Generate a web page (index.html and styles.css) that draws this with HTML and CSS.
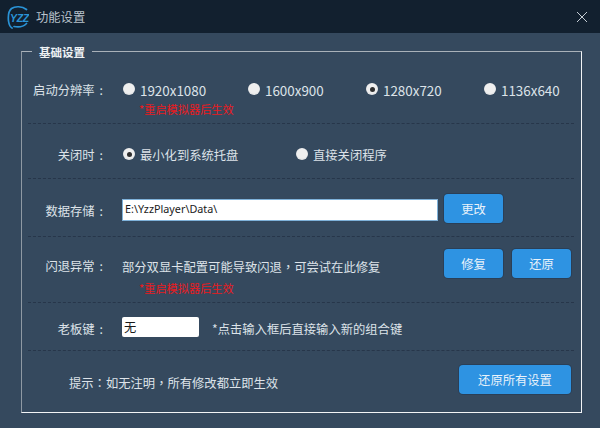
FILE: index.html
```html
<!DOCTYPE html>
<html lang="zh">
<head>
<meta charset="utf-8">
<title>功能设置</title>
<link rel="stylesheet" href="styles.css">
</head>
<body>
<div class="window">
  <header class="titlebar">
    <svg class="logo" width="22" height="24" viewBox="0 0 22 24">
      <path class="logo-ring" d="M19.500 4.500 C15 1 8 1 4.500 3.500 C1.500 6 1 11 1.500 16 C2 19.500 3 22 5 23"/>
      <path class="logo-ring" d="M7 21.500 C11.500 22.500 16.500 21.500 19.500 18.500"/>
      <text class="logo-text" x="3" y="16.500">YZZ</text>
    </svg>
    <span class="title">功能设置</span>
    <svg class="close" width="12" height="12" viewBox="0 0 12 12">
      <path d="M1 1 L11 11 M11 1 L1 11"/>
    </svg>
  </header>
  <main class="content">
    <section class="group">
      <h2 class="legend">基础设置</h2>
      <div class="row row-res">
        <div class="label">启动分辨率<span class="colon">:</span></div>
        <div class="main">
          <div class="radios radios-res">
            <label class="radio r1"><i class="dot"></i>1920x1080</label>
            <label class="radio r2"><i class="dot"></i>1600x900</label>
            <label class="radio r3"><i class="dot on"></i>1280x720</label>
            <label class="radio"><i class="dot"></i>1136x640</label>
          </div>
          <p class="note">*重启模拟器后生效</p>
        </div>
      </div>
      <div class="row row-close">
        <div class="label">关闭时<span class="colon">:</span></div>
        <div class="main">
          <div class="radios">
            <label class="radio r4"><i class="dot on"></i>最小化到系统托盘</label>
            <label class="radio"><i class="dot"></i>直接关闭程序</label>
          </div>
        </div>
      </div>
      <div class="row row-data">
        <div class="label">数据存储<span class="colon">:</span></div>
        <div class="main main-data">
          <div class="input input-path">E:\YzzPlayer\Data\</div>
          <button class="btn btn-small">更改</button>
        </div>
      </div>
      <div class="row row-crash">
        <div class="label">闪退异常<span class="colon">:</span></div>
        <div class="main main-crash">
          <div class="crash-text">
            <p class="desc">部分双显卡配置可能导致闪退<span class="punct" lang="zh-TW">，</span>可尝试在此修复</p>
            <p class="note">*重启模拟器后生效</p>
          </div>
          <div class="btns">
            <button class="btn btn-small">修复</button>
            <button class="btn btn-small">还原</button>
          </div>
        </div>
      </div>
      <div class="row row-boss">
        <div class="label">老板键<span class="colon">:</span></div>
        <div class="main main-boss">
          <div class="input input-key">无</div>
          <span class="desc">*点击输入框后直接输入新的组合键</span>
        </div>
      </div>
      <div class="row row-last">
        <p class="hint">提示<span class="punct" lang="zh-TW">：</span>如无注明<span class="punct" lang="zh-TW">，</span>所有修改都立即生效</p>
        <button class="btn btn-wide">还原所有设置</button>
      </div>
    </section>
  </main>
</div>
</body>
</html>
```
FILE: styles.css
```css
* { box-sizing: border-box; }
html, body { margin: 0; padding: 0; }
body {
  width: 600px;
  height: 428px;
  overflow: hidden;
  background: #35495e;
  font-family: "Noto Sans CJK SC", "Noto Sans", sans-serif;
  font-size: 12.3px;
  color: #dde3e9;
  text-spacing-trim: space-all;
}
p, h2 { margin: 0; font-weight: normal; }
.window { display: flex; flex-direction: column; height: 428px; }
.titlebar {
  height: 33px;
  background: #12202f;
  display: flex;
  align-items: center;
  padding: 0 12px 0 7px;
}
.logo { flex: none; margin-right: 7px; }
.logo-ring { fill: none; stroke: #2a93d6; stroke-width: 1.7; stroke-linecap: round; }
.logo-text {
  font-family: "Liberation Sans", sans-serif;
  font-size: 10.500px;
  font-weight: bold;
  font-style: italic;
  fill: #2a93d6;
  letter-spacing: -0.3px;
}
.title { font-size: 12.3px; color: #b9c3cc; flex: 1; }
.close { display: block; }
.close path { stroke: #c4ccd4; stroke-width: 1; fill: none; }
.content { padding: 18px 18px 15px 21px; flex: 1; display: flex; }
.group {
  position: relative;
  flex: 1;
  display: flex;
  flex-direction: column;
  padding: 0 7px 0 6px;
  border: 1px solid;
  border-color: #a9b1b9 #f2f4f6 #f2f4f6 #8f99a3;
}
.legend {
  position: absolute;
  left: 10px;
  top: -9px;
  padding: 0 7px;
  line-height: 18px;
  background: #35495e;
  color: #eef1f4;
  font-size: 11.500px;
  font-weight: 700;
}
.row {
  display: flex;
  align-items: flex-start;
  border-bottom: 1px dashed #27364a;
}
.row-res { height: 72px; padding-top: 29px; }
.row-close { height: 55px; padding-top: 22px; }
.row-data { height: 58px; padding-top: 15px; }
.row-crash { height: 66px; padding-top: 12px; }
.row-boss { height: 48px; padding-top: 14px; }
.row-last {
  flex: 1;
  border-bottom: 0;
  justify-content: space-between;
  padding: 14px 3px 0 41px;
}
.label {
  flex: none;
  width: 75px;
  margin-right: 19px;
  text-align: right;
  line-height: 18px;
}
.colon { margin-left: 5px; }
.row-data .label { margin-top: 8px; }
.row-crash .label { margin-top: 8px; }
.row-boss .label { margin-top: 3px; }
.main { flex: 1; min-width: 0; }
.radios { display: flex; height: 18px; }
.radio { display: flex; align-items: center; line-height: 18px; }
.radios-res .radio { font-size: 13.400px; }
.r1 { width: 125px; }
.r2 { width: 118px; }
.r3 { width: 118px; }
.r4 { width: 173px; }
.dot {
  flex: none;
  width: 12px;
  height: 12px;
  border-radius: 50%;
  margin: -2px 5px 0 1px;
  background: radial-gradient(circle at 50% 40%, #efefef 55%, #c9cdd1 100%);
  position: relative;
}
.dot.on::after {
  content: "";
  position: absolute;
  left: 3.500px;
  top: 3.500px;
  width: 5px;
  height: 5px;
  border-radius: 50%;
  background: #2f2f2f;
}
.note {
  color: #ea1a20;
  font-size: 11.200px;
  line-height: 18px;
  margin: 1px 0 0 17px;
}
.punct { font-family: "Noto Sans CJK TC", sans-serif; }
.main-data, .main-crash, .main-boss { display: flex; align-items: flex-start; }
.input {
  background: #fff;
  color: #1a1a1a;
  line-height: 18px;
}
.input-path {
  width: 316px;
  height: 22px;
  margin-top: 5px;
  margin-right: 6px;
  padding: 0 2px;
  border: 1px solid #7fb2da;
  font-family: "Noto Sans", sans-serif;
  font-size: 10.800px;
}
.input-key {
  width: 77px;
  height: 20px;
  border-radius: 2px;
  padding: 0 2px;
  margin-right: 13px;
  line-height: 20px;
}
.btn {
  flex: none;
  height: 29px;
  padding: 0;
  border: 0;
  border-radius: 4px;
  background: #2e93e2;
  box-shadow: 0 0 0 1px #2a3f57;
  color: #e9f2fa;
  font: inherit;
}
.btn-small { width: 59px; }
.btn-wide { width: 112px; }
.crash-text { padding-top: 9px; width: 322px; flex: none; }
.desc { line-height: 18px; }
.main-boss .desc { margin-top: 3px; }
.crash-text .note { margin-top: 3px; }
.btns { display: flex; gap: 9px; }
.hint { line-height: 18px; margin-top: 9px; }
```
